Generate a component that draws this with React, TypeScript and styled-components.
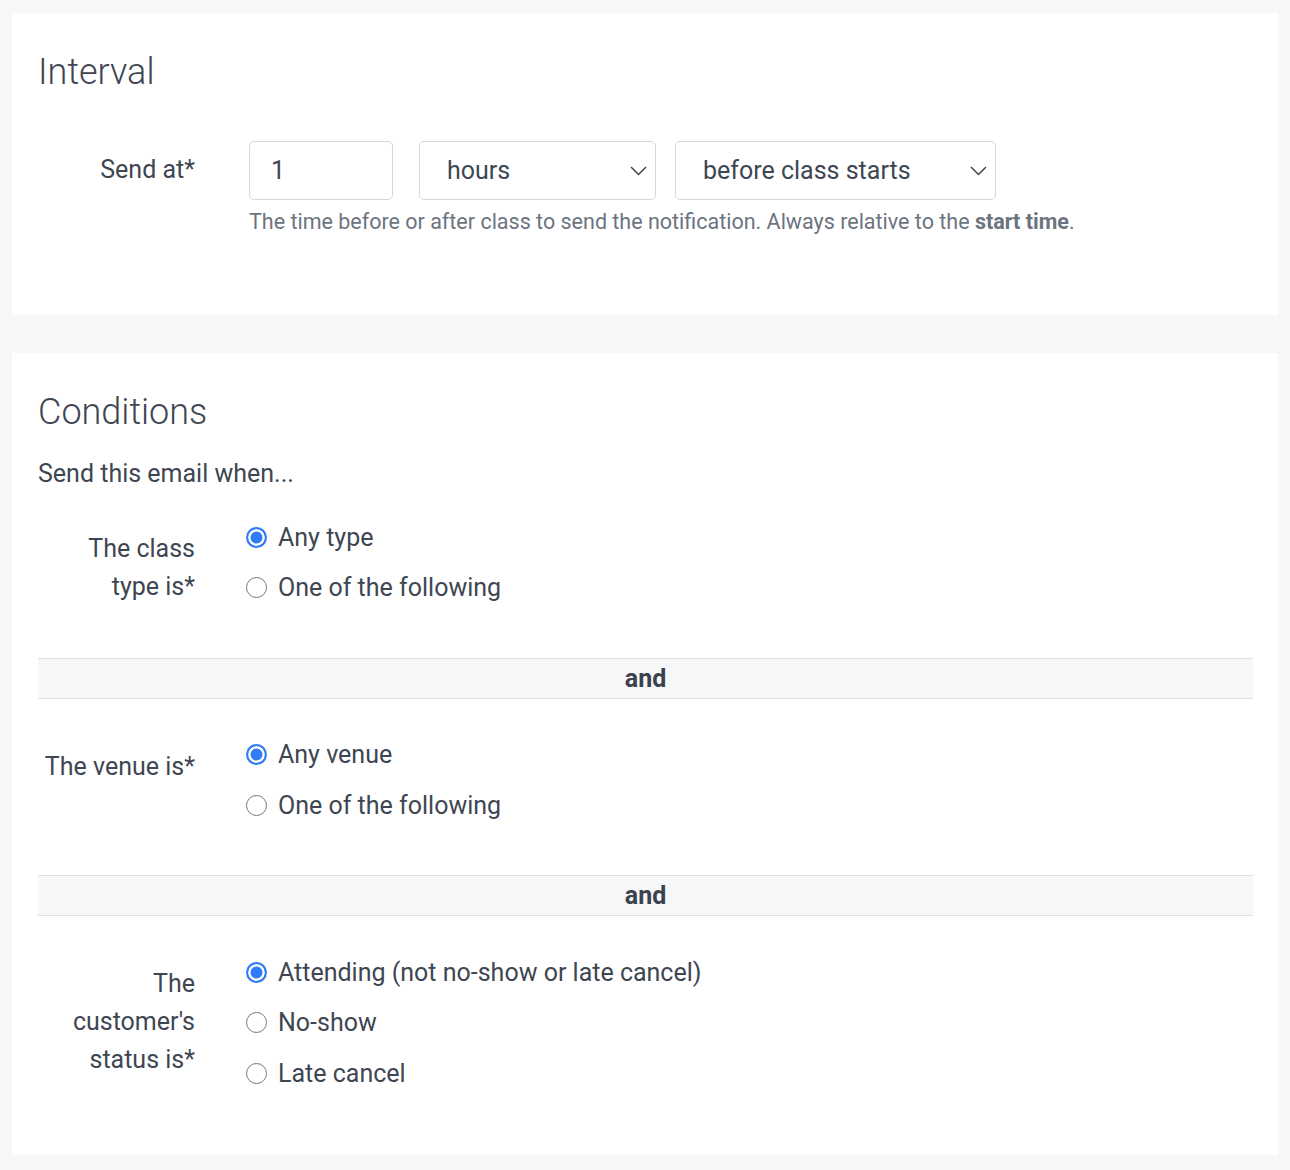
import React from 'react';
import styled, { createGlobalStyle } from 'styled-components';

const GlobalStyle = createGlobalStyle`
  body {
    margin: 0;
    background: #f6f7f9;
    font-family: Roboto, "Liberation Sans", sans-serif;
    color: #3e4652;
  }
`;

const Page = styled.div`
  padding: 13px 12px 14px;
  display: flex;
  flex-direction: column;
  gap: 38px;
`;

const Card = styled.section<{ $bottom: number }>`
  background: #fff;
  padding: 35px 25px ${p => p.$bottom}px 26px;
`;

const Heading = styled.h2`
  margin: 0;
  font-size: 36px;
  line-height: 48px;
  font-weight: 300;
  color: #3e4652;
`;

const FormRow = styled.div<{ $top?: number }>`
  display: grid;
  grid-template-columns: 157px 1fr;
  column-gap: 51px;
  margin-top: ${p => p.$top ?? 0}px;
`;

const Label = styled.div<{ $pad: number }>`
  text-align: right;
  font-size: 25px;
  line-height: 38px;
  padding-top: ${p => p.$pad}px;
`;

const Controls = styled.div`
  display: flex;
  flex-direction: column;
`;

const InputLine = styled.div`
  display: flex;
  align-items: center;
  margin-left: 3px;
`;

const TextBox = styled.div`
  box-sizing: border-box;
  width: 144px;
  height: 59px;
  border: 1px solid #d3d7dd;
  border-radius: 5px;
  padding-left: 21px;
  display: flex;
  align-items: center;
  font-size: 25px;
`;

const SelectBox = styled.div<{ $w: number; $gap: number }>`
  box-sizing: border-box;
  width: ${p => p.$w}px;
  height: 59px;
  margin-left: ${p => p.$gap}px;
  border: 1px solid #d3d7dd;
  border-radius: 5px;
  padding: 0 8px 0 27px;
  display: flex;
  align-items: center;
  justify-content: space-between;
  font-size: 25px;
`;

const Help = styled.div`
  margin: 7px 0 0 3px;
  font-size: 21.5px;
  line-height: 30px;
  color: #6c7480;
  b {
    font-weight: 700;
  }
`;

const Intro = styled.p`
  margin: 20px 0 0;
  font-size: 25px;
  line-height: 36px;
`;

const Option = styled.label`
  display: flex;
  align-items: center;
  height: 50.5px;
  gap: 11px;
  font-size: 25px;
`;

const Radio = styled.span<{ $on?: boolean }>`
  box-sizing: border-box;
  flex: none;
  width: 21px;
  height: 21px;
  border-radius: 50%;
  border: ${p => (p.$on ? '2px solid #2f7cf6' : '1.5px solid #767676')};
  background: ${p => (p.$on ? '#2f7cf6' : '#fff')};
  box-shadow: ${p => (p.$on ? 'inset 0 0 0 2.5px #fff' : 'none')};
`;

const AndBar = styled.div`
  margin: 44.5px 0 31px;
  height: 41px;
  box-sizing: border-box;
  border-top: 1px solid #dde1e6;
  border-bottom: 1px solid #dde1e6;
  background: #f6f7f9;
  display: flex;
  align-items: center;
  justify-content: center;
  font-size: 25px;
  font-weight: 700;
  color: #3a424e;
`;

const Spacer = styled.div`
  height: 20px;
`;

const Chevron = () => (
  <svg width="17" height="10" viewBox="0 0 17 10" fill="none">
    <path d="M1 1l7.5 7.5L16 1" stroke="#3e4652" strokeWidth="1.5" />
  </svg>
);

type Choice = { text: string; on?: boolean };

const RadioGroup = ({ label, choices }: { label: React.ReactNode; choices: Choice[] }) => (
  <FormRow>
    <Label $pad={18}>{label}</Label>
    <Controls>
      {choices.map(c => (
        <Option key={c.text}>
          <Radio $on={c.on} />
          {c.text}
        </Option>
      ))}
    </Controls>
  </FormRow>
);

export default function App() {
  return (
    <>
      <GlobalStyle />
      <Page>
        <Card $bottom={78}>
          <Heading>Interval</Heading>
          <FormRow $top={45}>
            <Label $pad={10}>Send at*</Label>
            <Controls>
              <InputLine>
                <TextBox>1</TextBox>
                <SelectBox $w={237} $gap={26}>
                  hours
                  <Chevron />
                </SelectBox>
                <SelectBox $w={321} $gap={19}>
                  before class starts
                  <Chevron />
                </SelectBox>
              </InputLine>
              <Help>
                The time before or after class to send the notification. Always relative to the <b>start time</b>.
              </Help>
            </Controls>
          </FormRow>
        </Card>
        <Card $bottom={56}>
          <Heading>Conditions</Heading>
          <Intro>Send this email when...</Intro>
          <Spacer />
          <RadioGroup
            label="The class type is*"
            choices={[{ text: 'Any type', on: true }, { text: 'One of the following' }]}
          />
          <AndBar>and</AndBar>
          <RadioGroup
            label="The venue is*"
            choices={[{ text: 'Any venue', on: true }, { text: 'One of the following' }]}
          />
          <AndBar>and</AndBar>
          <RadioGroup
            label="The customer's status is*"
            choices={[
              { text: 'Attending (not no-show or late cancel)', on: true },
              { text: 'No-show' },
              { text: 'Late cancel' },
            ]}
          />
        </Card>
      </Page>
    </>
  );
}
